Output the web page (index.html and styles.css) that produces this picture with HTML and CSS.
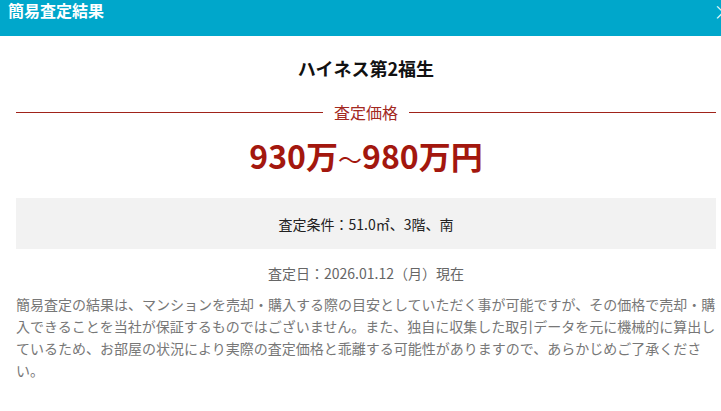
FILE: index.html
```html
<!DOCTYPE html>
<html lang="ja">
<head>
<meta charset="utf-8">
<title>簡易査定結果</title>
<link rel="stylesheet" href="styles.css">
</head>
<body>
<div class="modal">
  <div class="modal-header">
    <span class="modal-title">簡易査定結果</span>
    <span class="modal-close">×</span>
  </div>
  <div class="modal-body">
    <h2 class="property-name">ハイネス第2福生</h2>
    <div class="price-heading"><span>査定価格</span></div>
    <div class="price">930万<span class="tilde">～</span>980万円</div>
    <div class="conditions">査定条件：51.0㎡、3階、南</div>
    <div class="date">査定日：2026.01.12（月）現在</div>
    <p class="note">簡易査定の結果は、マンションを売却・購入する際の目安としていただく事が可能ですが、その価格で売却・購入できることを当社が保証するものではございません。また、独自に収集した取引データを元に機械的に算出しているため、お部屋の状況により実際の査定価格と乖離する可能性がありますので、あらかじめご了承ください。</p>
  </div>
</div>
</body>
</html>
```
FILE: styles.css
```css
html, body {
  margin: 0;
  padding: 0;
  background: #fff;
  overflow: hidden;
}
body {
  font-family: "Noto Sans CJK JP", "Noto Sans", sans-serif;
}
.modal {
  width: 741px;
}
.modal-header {
  height: 36px;
  background: #00a7cb;
  color: #fff;
  display: flex;
  justify-content: space-between;
  align-items: flex-start;
  padding: 0 8px;
  box-sizing: border-box;
}
.modal-title {
  font-size: 16px;
  font-weight: bold;
  line-height: 21px;
}
.modal-close {
  font-size: 20px;
  line-height: 24px;
  font-weight: 300;
}
.modal-body {
  width: 700px;
  padding: 19px 16px 0;
}
.property-name {
  margin: 0;
  text-align: center;
  font-size: 18px;
  line-height: 26px;
  font-weight: bold;
  color: #111;
}
.price-heading {
  margin-top: 19px;
  display: flex;
  align-items: center;
  gap: 11px;
  color: #a3291f;
  font-size: 16px;
  line-height: 24px;
}
.price-heading::before,
.price-heading::after {
  content: "";
  flex: 1;
  height: 1px;
  background: #a0231a;
}
.price {
  margin-top: 11px;
  text-align: center;
  font-size: 32px;
  line-height: 40px;
  font-weight: bold;
  color: #a3170e;
}
.tilde {
  font-size: 24px;
  font-weight: normal;
}
.conditions {
  margin-top: 19px;
  height: 51px;
  background: #f2f2f2;
  display: flex;
  align-items: center;
  justify-content: center;
  font-size: 14px;
  color: #222;
}
.date {
  margin-top: 13px;
  text-align: center;
  font-size: 14px;
  line-height: 22px;
  color: #666;
}
.note {
  margin: 9px 0 0;
  font-size: 14px;
  line-height: 22px;
  color: #777;
}
```
